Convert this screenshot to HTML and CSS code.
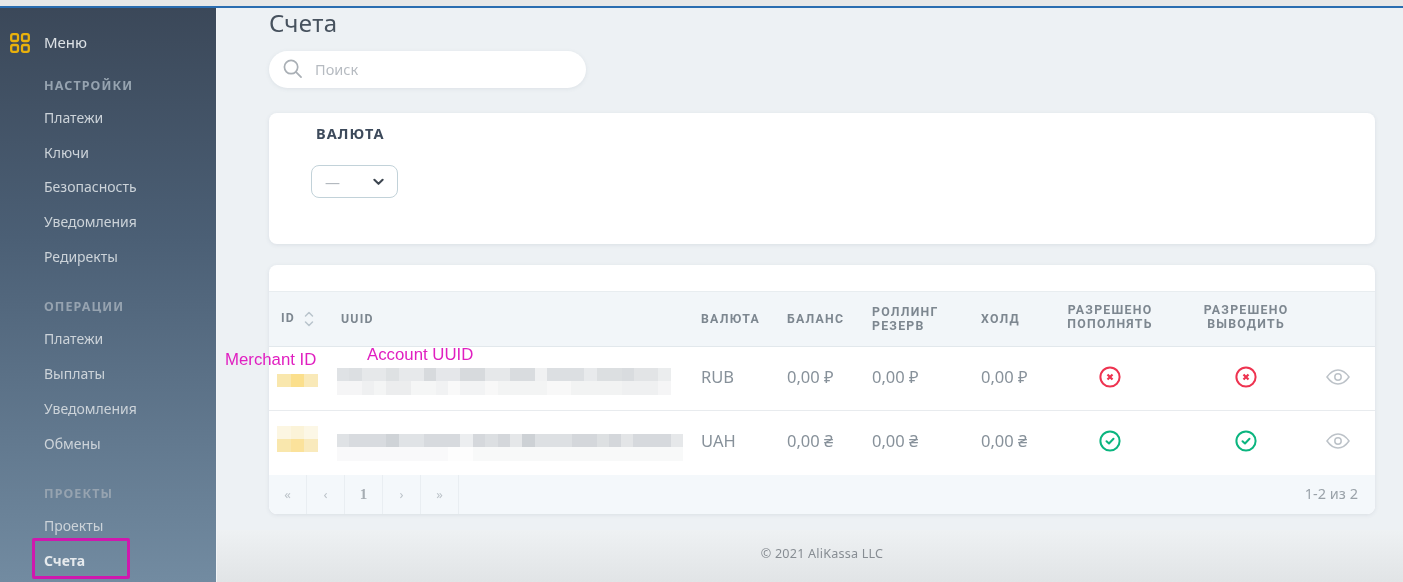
FILE: index.html
```html
<!DOCTYPE html>
<html>
	<head>
		<title>Счета</title>
		<meta charset="utf-8">
		<link rel="stylesheet" href="styles.css">
	</head>
	<body>
		<div class="topbar"></div>
		<div class="page">
			<aside class="sidebar">
				<div class="menu-head">
					<svg class="menu-icon" viewBox="0 0 20 20" fill="none" stroke="#e9b10c" stroke-width="2.3">
						<rect x="1.2" y="1.2" width="6.8" height="6.8" rx="1.8"/>
						<rect x="12" y="1.2" width="6.8" height="6.8" rx="1.8"/>
						<rect x="1.2" y="12" width="6.8" height="6.8" rx="1.8"/>
						<rect x="12" y="12" width="6.8" height="6.8" rx="1.8"/>
					</svg>
					<span>Меню</span>
				</div>
				<div class="menu-group">
					<div class="menu-title">НАСТРОЙКИ</div>
					<a class="menu-item">Платежи</a>
					<a class="menu-item">Ключи</a>
					<a class="menu-item">Безопасность</a>
					<a class="menu-item">Уведомления</a>
					<a class="menu-item">Редиректы</a>
				</div>
				<div class="menu-group">
					<div class="menu-title">ОПЕРАЦИИ</div>
					<a class="menu-item">Платежи</a>
					<a class="menu-item">Выплаты</a>
					<a class="menu-item">Уведомления</a>
					<a class="menu-item">Обмены</a>
				</div>
				<div class="menu-group">
					<div class="menu-title">ПРОЕКТЫ</div>
					<a class="menu-item">Проекты</a>
					<a class="menu-item active">Счета<span class="marker"></span></a>
				</div>
			</aside>
			<div class="main">
				<div class="content">
					<h1 class="title">Счета</h1>
					<div class="search">
						<svg class="search-icon" viewBox="0 0 20 20" fill="none" stroke="#a9afb5" stroke-width="1.8" stroke-linecap="round">
							<circle cx="8.5" cy="8.5" r="7"/>
							<path d="M13.8 13.8 L19 19"/>
						</svg>
						<span>Поиск</span>
					</div>
					<div class="card filter">
						<div class="filter-label">ВАЛЮТА</div>
						<div class="select">
							<span class="select-value">—</span>
							<svg class="select-arrow" viewBox="0 0 12 8" fill="none" stroke="#3d4650" stroke-width="2.2" stroke-linecap="round" stroke-linejoin="round">
								<path d="M1.5 1.5 L6 6 L10.5 1.5"/>
							</svg>
						</div>
					</div>
					<div class="card accounts">
						<table class="table">
							<colgroup>
								<col class="c-id"><col class="c-uuid"><col class="c-cur"><col class="c-bal"><col class="c-roll"><col class="c-hold"><col class="c-in"><col class="c-out"><col class="c-view">
							</colgroup>
							<thead>
								<tr>
									<th>ID
										<svg class="sort" viewBox="0 0 10 16" fill="none" stroke="#b9c4cc" stroke-width="1.5" stroke-linecap="round" stroke-linejoin="round">
											<path d="M1.5 5 L5 1.5 L8.5 5"/>
											<path d="M1.5 11 L5 14.5 L8.5 11"/>
										</svg>
									</th>
									<th>UUID</th>
									<th>ВАЛЮТА</th>
									<th>БАЛАНС</th>
									<th>РОЛЛИНГ<br>РЕЗЕРВ</th>
									<th>ХОЛД</th>
									<th class="center">РАЗРЕШЕНО<br>ПОПОЛНЯТЬ</th>
									<th class="center">РАЗРЕШЕНО<br>ВЫВОДИТЬ</th>
									<th></th>
								</tr>
							</thead>
							<tbody>
								<tr>
									<td class="masked"><div class="blur-id first"></div></td>
									<td class="masked"><div class="blur-uuid first"></div></td>
									<td>RUB</td>
									<td>0,00 ₽</td>
									<td>0,00 ₽</td>
									<td>0,00 ₽</td>
									<td class="center">
										<svg class="status" viewBox="0 0 22 22" fill="none" stroke="#ee3350" stroke-width="2">
											<circle cx="11" cy="11" r="9.6"/>
											<path d="M8.5 8.5 L13.5 13.5 M13.5 8.5 L8.5 13.5" stroke-width="2.2"/>
										</svg>
									</td>
									<td class="center">
										<svg class="status" viewBox="0 0 22 22" fill="none" stroke="#ee3350" stroke-width="2">
											<circle cx="11" cy="11" r="9.6"/>
											<path d="M8.5 8.5 L13.5 13.5 M13.5 8.5 L8.5 13.5" stroke-width="2.2"/>
										</svg>
									</td>
									<td class="center">
										<svg class="eye" viewBox="0 0 24 16" fill="none" stroke="#bcc2c8" stroke-width="1.5">
											<path d="M1 8 C4.5 3 8 1 12 1 C16 1 19.5 3 23 8 C19.5 13 16 15 12 15 C8 15 4.5 13 1 8 Z"/>
											<circle cx="12" cy="8" r="3.2"/>
										</svg>
									</td>
								</tr>
								<tr>
									<td class="masked"><div class="blur-id second"></div></td>
									<td class="masked"><div class="blur-uuid second"></div></td>
									<td>UAH</td>
									<td>0,00 ₴</td>
									<td>0,00 ₴</td>
									<td>0,00 ₴</td>
									<td class="center">
										<svg class="status" viewBox="0 0 22 22" fill="none" stroke="#0bb57f" stroke-width="2">
											<circle cx="11" cy="11" r="9.6"/>
											<path d="M7.5 11.2 L10 13.5 L14.5 8.8" stroke-width="2" stroke-linecap="round" stroke-linejoin="round"/>
										</svg>
									</td>
									<td class="center">
										<svg class="status" viewBox="0 0 22 22" fill="none" stroke="#0bb57f" stroke-width="2">
											<circle cx="11" cy="11" r="9.6"/>
											<path d="M7.5 11.2 L10 13.5 L14.5 8.8" stroke-width="2" stroke-linecap="round" stroke-linejoin="round"/>
										</svg>
									</td>
									<td class="center">
										<svg class="eye" viewBox="0 0 24 16" fill="none" stroke="#bcc2c8" stroke-width="1.5">
											<path d="M1 8 C4.5 3 8 1 12 1 C16 1 19.5 3 23 8 C19.5 13 16 15 12 15 C8 15 4.5 13 1 8 Z"/>
											<circle cx="12" cy="8" r="3.2"/>
										</svg>
									</td>
								</tr>
							</tbody>
						</table>
						<div class="pager">
							<div class="pages">
								<span class="page-btn">«</span>
								<span class="page-btn">‹</span>
								<span class="page-btn current">1</span>
								<span class="page-btn">›</span>
								<span class="page-btn">»</span>
							</div>
							<div class="pager-count">1-2 из 2</div>
						</div>
						<span class="note note-id">Merchant ID</span>
						<span class="note note-uuid">Account UUID</span>
					</div>
				</div>
				<footer class="footer">© 2021 AliKassa LLC</footer>
			</div>
		</div>
	</body>
</html>
```
FILE: styles.css
```css
* {
	box-sizing: border-box;
}
html, body {
	height: 100%;
}
body {
	margin: 0;
	overflow: hidden;
	display: flex;
	flex-direction: column;
	font-family: "Noto Sans", "Open Sans", sans-serif;
	background: #edf1f4;
	color: #7c8791;
}
.topbar {
	height: 8px;
	flex: none;
	background: #e7e8e8;
	border-bottom: 2px solid #2a6db0;
}
.page {
	flex: 1;
	display: flex;
	min-height: 0;
	filter: blur(0.4px);
}

/* sidebar */
.sidebar {
	width: 217px;
	flex: none;
	padding: 24px 0 0 44px;
	background: linear-gradient(180deg, #3b4859 0%, #4b5f75 40%, #728ba1 100%);
	border-right: 1px solid #f2f4f6;
	color: #ccd3d9;
	font-size: 14px;
}
.menu-head {
	display: flex;
	align-items: center;
	height: 20px;
	margin-bottom: 18px;
	font-size: 15px;
	color: #dde2e6;
	position: relative;
}
.menu-icon {
	position: absolute;
	left: -34px;
	top: 1px;
	width: 20px;
	height: 20px;
}
.menu-group {
	margin-bottom: 17px;
}
.menu-title {
	height: 31px;
	line-height: 31px;
	font-size: 12.5px;
	font-weight: 700;
	letter-spacing: 1.1px;
	color: #96a3b0;
}
.menu-item {
	display: block;
	position: relative;
	height: 34.7px;
	line-height: 34.7px;
	white-space: nowrap;
}
.menu-item.active {
	font-weight: 700;
	color: #e6eaed;
}
.marker {
	position: absolute;
	left: -12px;
	top: -6px;
	width: 98px;
	height: 41px;
	border: 3px solid #cf18ae;
	border-radius: 2px;
}

/* main */
.main {
	flex: 1;
	min-width: 0;
	display: flex;
	flex-direction: column;
}
.content {
	flex: 1;
	padding: 0 28px 0 52px;
}
.title {
	margin: 0;
	height: 43px;
	font-size: 24px;
	line-height: 30px;
	font-weight: 400;
	letter-spacing: 0.4px;
	color: #47525e;
}
.search {
	display: flex;
	align-items: center;
	gap: 13px;
	width: 317px;
	height: 37px;
	padding: 0 0 2px 14px;
	border-radius: 19px;
	background: #fff;
	box-shadow: 0 1px 4px rgba(80, 100, 120, 0.1);
	font-size: 14.5px;
	color: #b6bbc1;
}
.search-icon {
	width: 19px;
	height: 19px;
}
.card {
	position: relative;
	background: #fff;
	border-radius: 8px;
	box-shadow: 0 1px 4px rgba(80, 100, 120, 0.12);
}
.filter {
	height: 131px;
	margin: 25px 0 21px;
	padding: 10px 42px;
}
.filter-label {
	padding-left: 5px;
	height: 20px;
	line-height: 20px;
	font-size: 14.5px;
	font-weight: 700;
	letter-spacing: 1.1px;
	color: #3d4a5b;
}
.select {
	display: flex;
	align-items: center;
	justify-content: space-between;
	width: 87px;
	height: 33px;
	margin-top: 22px;
	padding: 0 13px;
	border: 1px solid #c2d2d9;
	border-radius: 8px;
}
.select-value {
	color: #b3b9bf;
	font-size: 15px;
}
.select-arrow {
	width: 11px;
	height: 8px;
}

/* table */
.accounts {
	height: 249px;
	padding-top: 26px;
}
.table {
	width: 100%;
	table-layout: fixed;
	border-collapse: collapse;
	font-size: 16.5px;
}
.c-id { width: 60px; }
.c-uuid { width: 360px; }
.c-cur { width: 86px; }
.c-bal { width: 85px; }
.c-roll { width: 109px; }
.c-hold { width: 68px; }
.c-in { width: 146px; }
.c-out { width: 126px; }
.table th {
	height: 55px;
	padding: 0 0 0 12px;
	text-align: left;
	font-family: Roboto, "Noto Sans", sans-serif;
	font-size: 12.3px;
	line-height: 14.5px;
	font-weight: 700;
	letter-spacing: 1.25px;
	color: #7d8790;
	background: #f2f6f9;
	border-top: 1px solid #e8edf0;
	border-bottom: 1px solid #e2e8ec;
}
.table td {
	height: 64px;
	padding: 0 0 4px 12px;
	border-bottom: 1px solid #e8ebee;
	color: #87919a;
	white-space: nowrap;
}
.table tbody tr:last-child td {
	border-bottom: 0;
}
.table .center {
	text-align: center;
	padding: 0 0 4px;
}
.table .masked {
	padding-bottom: 0;
}
.sort {
	width: 10px;
	height: 16px;
	margin-left: 5px;
	vertical-align: middle;
}
.status {
	display: block;
	width: 22px;
	height: 22px;
	margin: 0 auto;
}
.eye {
	display: block;
	width: 24px;
	height: 16px;
	margin: 0 auto;
	transform: translateX(-4px);
}

/* blurred values */
.blur-id {
	width: 41px;
	margin-left: -4px;
}
.blur-id.first {
	height: 13px;
	margin-top: 3px;
	background: linear-gradient(90deg, #f9e7ad 0 14px, #fbdf8c 14px 27px, #f9e9b8 27px);
}
.blur-id.second {
	height: 26px;
	margin-bottom: 8px;
	background:
		linear-gradient(90deg, #f9e7ad 0 14px, #fbe29b 14px 27px, #f9eabd 27px) bottom / 100% 13px no-repeat,
		linear-gradient(90deg, #fcf6e2 0 14px, #fbf3d8 14px 27px, #fcf7e6 27px) top / 100% 13px no-repeat;
}
.blur-uuid {
	height: 27px;
	margin-left: -4px;
}
.blur-uuid.first {
	width: 334px;
	margin-top: 5px;
	background:
		linear-gradient(90deg, #dfe2e5 0 12px, #dcdfe2 12px 25px, #e6e8ea 25px 49px, #dee1e3 49px 62px, #e7e9eb 62px 87px, #d7dadd 87px 99px, #e5e7ea 99px 123px, #d7dadd 123px 148px, #e6e8ea 148px 173px, #d9dcdf 173px 198px, #f0f1f2 198px 210px, #dcdfe2 210px 247px, #e8eaec 247px 260px, #dcdfe1 260px 285px, #d9dcdf 285px 297px, #e2e4e6 297px 321px, #ebedee 321px) top / 100% 13px no-repeat,
		linear-gradient(90deg, #f5f5f6 0 25px, #eff0f1 25px 37px, #f4f5f5 37px 49px, #ecedee 49px 74px, #f5f6f6 74px 99px, #f1f2f3 99px 111px, #f9f9f9 111px 123px, #f2f3f4 123px 148px, #f8f8f8 148px 161px, #f3f4f4 161px 210px, #f8f8f8 210px 234px, #f2f3f3 234px 285px, #eff0f1 285px 321px, #f5f5f6 321px) bottom / 100% 14px no-repeat;
}
.blur-uuid.second {
	width: 346px;
	margin-top: 9px;
	background:
		linear-gradient(90deg, #dfe2e5 0 12px, #d8dbdf 12px 49px, #cfd3d7 49px 62px, #e0e3e6 62px 87px, #d7dade 87px 123px, #eceef0 123px 136px, #d5d8dc 136px 148px, #dcdfe2 148px 161px, #d4d7db 161px 173px, #e5e7e9 173px 185px, #cdd1d5 185px 198px, #dde0e3 198px 235px, #d4d7db 235px 260px, #dde0e2 260px 272px, #d4d7db 272px 284px, #e3e5e7 284px 296px, #d6d9dd 296px 334px, #e6e8ea 334px) top / 100% 13px no-repeat,
		linear-gradient(90deg, #f9f9fa 0 111px, #fdfdfd 111px 136px, #f8f9f9 136px) bottom / 100% 14px no-repeat;
}

/* pager */
.pager {
	display: flex;
	align-items: center;
	justify-content: space-between;
	height: 39px;
	padding-right: 17px;
	background: #f4f8fb;
	border-radius: 0 0 8px 8px;
	font-size: 14.5px;
	color: #9aa2a9;
}
.pager-count {
	padding-bottom: 3px;
}
.pages {
	display: flex;
	height: 100%;
}
.page-btn {
	display: flex;
	align-items: center;
	justify-content: center;
	width: 38px;
	border-right: 1px solid #e9eef2;
	color: #bcc3c9;
	font-size: 13px;
}
.page-btn.current {
	color: #a6adb3;
	font-size: 15px;
	font-weight: 700;
	font-family: "Liberation Serif", serif;
}
.note {
	position: absolute;
	font-family: "Liberation Sans", sans-serif;
	font-size: 16.8px;
	line-height: 18px;
	color: #e01fc0;
	white-space: nowrap;
}
.note-id {
	left: -44px;
	top: 86px;
}
.note-uuid {
	left: 98px;
	top: 81px;
}
.footer {
	height: 52px;
	flex: none;
	display: flex;
	align-items: center;
	justify-content: center;
	padding: 0 0 6px 24px;
	background: linear-gradient(180deg, #eef1f3 0%, #e1e4e6 100%);
	font-size: 12.6px;
	letter-spacing: 0.2px;
	color: #878d93;
}
```
